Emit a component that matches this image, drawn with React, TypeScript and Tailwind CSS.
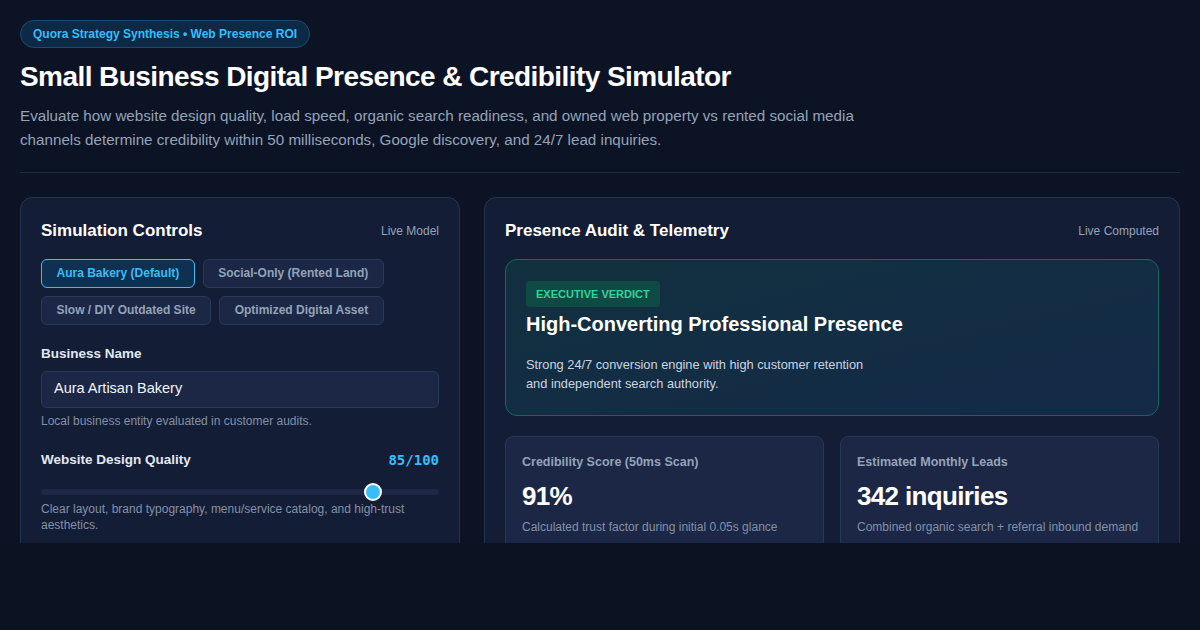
import React from "react";

const presets = [
  { label: "Aura Bakery (Default)", active: true },
  { label: "Social-Only (Rented Land)", active: false },
  { label: "Slow / DIY Outdated Site", active: false },
  { label: "Optimized Digital Asset", active: false },
];

export default function App() {
  const value = 85;
  return (
    <div
      className="w-[1200px] h-[630px] bg-[#0b1222] text-white"
      style={{ fontFamily: '"Liberation Sans", Arial, sans-serif' }}
    >
      <div className="h-[543px] overflow-hidden bg-[#0c1325] px-5 pt-5">
        <div className="inline-flex items-center h-[28px] px-3 rounded-full border border-[#1d4a70] bg-[#0c2a46] text-[12px] font-bold text-[#38bdf8]">
          Quora Strategy Synthesis • Web Presence ROI
        </div>
        <h1 className="mt-[12px] text-[28px] leading-[34px] font-bold tracking-[-0.57px] text-white">
          Small Business Digital Presence &amp; Credibility Simulator
        </h1>
        <p className="mt-[10px] max-w-[860px] text-[15.2px] leading-[24px] text-[#94a3b8]">
          Evaluate how website design quality, load speed, organic search readiness, and owned web property vs rented social media
          channels determine credibility within 50 milliseconds, Google discovery, and 24/7 lead inquiries.
        </p>
        <div className="mt-[20px] h-px bg-[#1e2b45]" />

        <div className="mt-[24px] grid grid-cols-[440px_1fr] gap-6">
          {/* Left panel */}
          <div className="rounded-xl border border-[#243350] bg-[#131d35] px-5 pt-5 pb-6 h-[400px]">
            <div className="flex items-center justify-between">
              <h2 className="text-[17px] font-bold text-white">Simulation Controls</h2>
              <span className="text-[12px] text-[#94a3b8]">Live Model</span>
            </div>
            <div className="mt-[15px] flex flex-wrap gap-2">
              {presets.map((p) => (
                <button
                  key={p.label}
                  className={
                    p.active
                      ? "h-[29px] px-[14.5px] rounded-[6px] border border-[#38bdf8] bg-[#0f3050] text-[12px] font-bold text-[#38bdf8]"
                      : "h-[29px] px-[14.5px] rounded-[6px] border border-[#2a3a5a] bg-[#1b2745] text-[12px] font-bold text-[#94a3b8]"
                  }
                >
                  {p.label}
                </button>
              ))}
            </div>

            <div className="mt-[19px] text-[13.5px] font-bold text-[#e2e8f0]">Business Name</div>
            <div className="mt-[7px] h-[37px] rounded-[6px] border border-[#2a3a5a] bg-[#1b2745] px-3 flex items-center text-[14.5px] text-[#f1f5f9]">
              Aura Artisan Bakery
            </div>
            <div className="mt-[4px] text-[12px] text-[#8391a8]">Local business entity evaluated in customer audits.</div>

            <div className="mt-[20px] flex items-center justify-between">
              <span className="text-[13.5px] font-bold text-[#e2e8f0]">Website Design Quality</span>
              <span
                className="text-[14px] font-bold text-[#38bdf8]"
                style={{ fontFamily: '"DejaVu Sans Mono", "Liberation Mono", monospace' }}
              >
                85/100
              </span>
            </div>
            <div className="relative mt-[18px] h-[6px] rounded-full bg-[#1c2846]">
              <div
                className="absolute top-1/2 -translate-y-1/2 -translate-x-1/2 w-[18px] h-[18px] rounded-full bg-[#38bdf8] border-2 border-white"
                style={{ left: `calc(9px + (100% - 18px) * ${value / 100})` }}
              />
            </div>
            <div className="mt-[6px] text-[12px] leading-[16px] text-[#8391a8]">
              Clear layout, brand typography, menu/service catalog, and high-trust aesthetics.
            </div>
          </div>

          {/* Right panel */}
          <div className="rounded-xl border border-[#243350] bg-[#131d35] px-5 pt-5 h-[400px]">
            <div className="flex items-center justify-between">
              <h2 className="text-[17px] font-bold text-white">Presence Audit &amp; Telemetry</h2>
              <span className="text-[12px] text-[#94a3b8]">Live Computed</span>
            </div>
            <div className="mt-[15px] rounded-xl border border-[#0f6b5c] bg-gradient-to-br from-[#12303f] to-[#142a48] px-5 pt-[21px] pb-[22px]">
              <span className="inline-block rounded-[4px] bg-[#0f4a44] px-[10px] py-[5px] text-[11px] font-bold text-[#34d399]">
                EXECUTIVE VERDICT
              </span>
              <h3 className="mt-[4px] text-[20px] leading-[26px] font-bold text-white">
                High-Converting Professional Presence
              </h3>
              <p className="mt-[18px] max-w-[350px] text-[12.8px] leading-[19px] text-[#cbd5e1]">
                Strong 24/7 conversion engine with high customer retention and independent search authority.
              </p>
            </div>

            <div className="mt-[20px] grid grid-cols-2 gap-4">
              <div className="rounded-lg border border-[#273756] bg-[#1b2745] px-4 pt-[16px] pb-4">
                <div className="text-[12.5px] font-bold text-[#94a3b8]">Credibility Score (50ms Scan)</div>
                <div className="mt-[9px] text-[26px] leading-[30px] font-bold tracking-tight text-white">91%</div>
                <div className="mt-[7px] text-[12px] text-[#8391a8]">Calculated trust factor during initial 0.05s glance</div>
              </div>
              <div className="rounded-lg border border-[#273756] bg-[#1b2745] px-4 pt-[16px] pb-4">
                <div className="text-[12.5px] font-bold text-[#94a3b8]">Estimated Monthly Leads</div>
                <div className="mt-[9px] text-[26px] leading-[30px] font-bold tracking-tight text-white">342 inquiries</div>
                <div className="mt-[7px] text-[12px] text-[#8391a8]">Combined organic search + referral inbound demand</div>
              </div>
            </div>
          </div>
        </div>
      </div>
    </div>
  );
}
